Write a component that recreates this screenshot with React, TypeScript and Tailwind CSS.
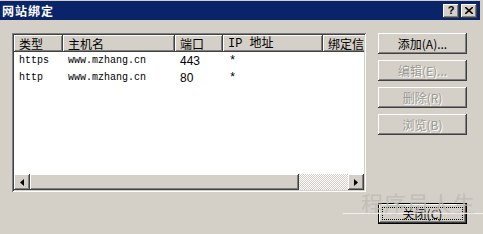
import React from 'react';

const raised =
  'bg-[#d4d0c8] shadow-[inset_-1px_-1px_#404040,inset_1px_1px_#ffffff,inset_-2px_-2px_#808080,inset_2px_2px_#d4d0c8]';
const sunken =
  'shadow-[inset_1px_1px_#808080,inset_-1px_-1px_#ffffff,inset_2px_2px_#404040,inset_-2px_-2px_#d4d0c8]';

const cjk = "font-['SimSun','Noto_Sans_CJK_SC',sans-serif]";
const mono = "font-['Liberation_Mono','Noto_Sans_CJK_SC',monospace]";

const columns = [
  { label: '类型', w: 'w-[49px]' },
  { label: '主机名', w: 'w-[112px]' },
  { label: '端口', w: 'w-[48px]' },
  { label: 'IP 地址', w: 'w-[100px]' },
  { label: '绑定信息', w: 'w-[60px]' },
];

const rows = [
  ['https', 'www.mzhang.cn', '443', '*'],
  ['http', 'www.mzhang.cn', '80', '*'],
];

function SideButton({ label, disabled }: { label: string; disabled?: boolean }) {
  return (
    <div
      className={`${raised} w-[89px] h-[21px] flex items-center justify-center text-[12px] ${cjk} ${
        disabled ? 'text-[#9a9890] [text-shadow:1px_1px_#ffffff]' : 'text-black'
      }`}
    >
      {label}
    </div>
  );
}

function Arrow({ dir }: { dir: 'left' | 'right' }) {
  return (
    <div className={`${raised} w-[16px] h-[16px] flex items-center justify-center shrink-0`}>
      <svg width="4" height="7" viewBox="0 0 4 7">
        {dir === 'left' ? <path d="M4 0V7L0 3.5Z" fill="#000" /> : <path d="M0 0V7L4 3.5Z" fill="#000" />}
      </svg>
    </div>
  );
}

export default function App() {
  return (
    <div className="relative w-[483px] h-[234px] bg-[#d4d0c8] overflow-hidden select-none">
      {/* title bar */}
      <div className="mt-px mr-[3px] h-[19px] bg-[#0a246a] flex items-center justify-between pl-[2px] pr-[3px]">
        <span className={`text-white font-bold text-[12px] tracking-[1px] ${cjk}`}>网站绑定</span>
        <div className="flex gap-[2px]">
          <div className={`${raised} w-[16px] h-[14px] flex items-center justify-center text-[11px] font-bold leading-none font-['Liberation_Sans',sans-serif]`}>
            ?
          </div>
          <div className={`${raised} w-[16px] h-[14px] flex items-center justify-center`}>
            <svg width="8" height="7" viewBox="0 0 8 7">
              <path d="M0 0L8 7M8 0L0 7" stroke="#000" strokeWidth="1.6" />
            </svg>
          </div>
        </div>
      </div>

      {/* body */}
      <div className="flex pl-[12px] pt-[13px] gap-[12px]">
        {/* list view */}
        <div className={`${sunken} bg-white w-[354px] h-[159px] p-[2px] flex flex-col`}>
          <div className="flex-1 overflow-hidden">
            <div className="flex h-[17px] w-[400px]">
              {columns.map((c) => (
                <div
                  key={c.label}
                  className={`${raised} ${c.w} shrink-0 h-[17px] flex items-center pl-[5px] text-[12px] text-black ${mono} whitespace-nowrap overflow-hidden`}
                >
                  <span className={c.label.startsWith('IP') ? '' : cjk}>{c.label}</span>
                </div>
              ))}
            </div>
            {rows.map((r) => (
              <div key={r[0]} className={`flex h-[17px] items-center text-[10px] text-black ${mono}`}>
                <span className="w-[49px] pl-[5px]">{r[0]}</span>
                <span className="w-[112px] pl-[5px]">{r[1]}</span>
                <span className="w-[48px] pl-[5px] font-['Liberation_Sans',sans-serif] text-[12px]">{r[2]}</span>
                <span className="w-[100px] pl-[6px] text-[12px]">{r[3]}</span>
              </div>
            ))}
          </div>
          {/* horizontal scrollbar */}
          <div className="flex h-[16px]">
            <Arrow dir="left" />
            <div className={`${raised} w-[269px] h-[16px] shrink-0`} />
            <div className="flex-1 h-[16px] bg-[repeating-conic-gradient(#ffffff_0_25%,#d4d0c8_0_50%)] bg-[length:2px_2px]" />
            <Arrow dir="right" />
          </div>
        </div>

        {/* side buttons */}
        <div className="flex flex-col gap-[6px]">
          <SideButton label="添加(A)..." />
          <SideButton label="编辑(E)..." disabled />
          <SideButton label="删除(R)" disabled />
          <SideButton label="浏览(B)" disabled />
        </div>
      </div>

      {/* close button */}
      <div className="flex justify-end pr-[16px] pt-[11px]">
        <div className="w-[89px] h-[21px] border border-black">
          <div className={`${raised} w-full h-full flex items-center justify-center p-[3px]`}>
            <div className={`w-full h-full border border-dotted border-black flex items-center justify-center text-[12px] text-black ${cjk}`}>
              关闭(C)
            </div>
          </div>
        </div>
      </div>

      {/* watermark */}
      <div className="absolute left-[361px] top-[186px] pointer-events-none">
        <span className={`text-[22px] text-[#bdbbb5] opacity-80 tracking-[1px] ${cjk}`}>程序员人生</span>
      </div>
      <div className="absolute left-[343px] top-[213px] w-[140px] h-px bg-white opacity-70 pointer-events-none" />
    </div>
  );
}
